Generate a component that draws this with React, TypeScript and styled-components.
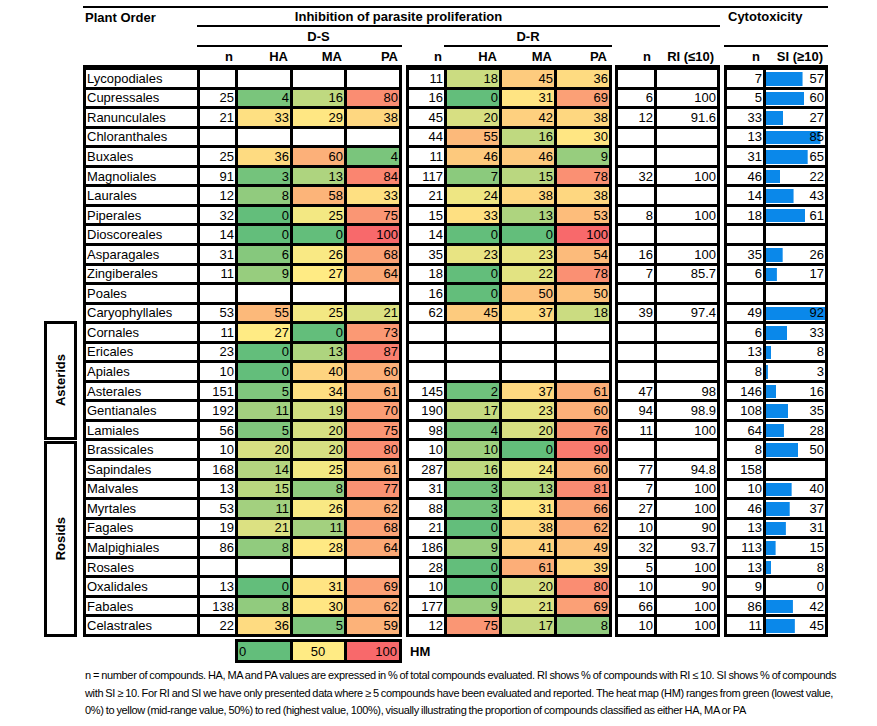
import React from 'react';
import styled, { createGlobalStyle } from 'styled-components';

const GlobalStyle = createGlobalStyle`
  *, *::before, *::after { box-sizing: border-box; }
  html, body { margin: 0; padding: 0; background: #fff; }
  body { font-family: "Liberation Sans", Arial, sans-serif; color: #000; }
`;

type V = number | null;
const _ = null;
interface Row { name: string; ds: V[]; dr: V[]; ri: (string | null)[]; cy: V[] }
const E4: V[] = [_, _, _, _];

const rows: Row[] = [
  { name: 'Lycopodiales', ds: E4, dr: [11, 18, 45, 36], ri: [_, _], cy: [7, 57] },
  { name: 'Cupressales', ds: [25, 4, 16, 80], dr: [16, 0, 31, 69], ri: ['6', '100'], cy: [5, 60] },
  { name: 'Ranunculales', ds: [21, 33, 29, 38], dr: [45, 20, 42, 38], ri: ['12', '91.6'], cy: [33, 27] },
  { name: 'Chloranthales', ds: E4, dr: [44, 55, 16, 30], ri: [_, _], cy: [13, 85] },
  { name: 'Buxales', ds: [25, 36, 60, 4], dr: [11, 46, 46, 9], ri: [_, _], cy: [31, 65] },
  { name: 'Magnoliales', ds: [91, 3, 13, 84], dr: [117, 7, 15, 78], ri: ['32', '100'], cy: [46, 22] },
  { name: 'Laurales', ds: [12, 8, 58, 33], dr: [21, 24, 38, 38], ri: [_, _], cy: [14, 43] },
  { name: 'Piperales', ds: [32, 0, 25, 75], dr: [15, 33, 13, 53], ri: ['8', '100'], cy: [18, 61] },
  { name: 'Dioscoreales', ds: [14, 0, 0, 100], dr: [14, 0, 0, 100], ri: [_, _], cy: [_, _] },
  { name: 'Asparagales', ds: [31, 6, 26, 68], dr: [35, 23, 23, 54], ri: ['16', '100'], cy: [35, 26] },
  { name: 'Zingiberales', ds: [11, 9, 27, 64], dr: [18, 0, 22, 78], ri: ['7', '85.7'], cy: [6, 17] },
  { name: 'Poales', ds: E4, dr: [16, 0, 50, 50], ri: [_, _], cy: [_, _] },
  { name: 'Caryophyllales', ds: [53, 55, 25, 21], dr: [62, 45, 37, 18], ri: ['39', '97.4'], cy: [49, 92] },
  { name: 'Cornales', ds: [11, 27, 0, 73], dr: E4, ri: [_, _], cy: [6, 33] },
  { name: 'Ericales', ds: [23, 0, 13, 87], dr: E4, ri: [_, _], cy: [13, 8] },
  { name: 'Apiales', ds: [10, 0, 40, 60], dr: E4, ri: [_, _], cy: [8, 3] },
  { name: 'Asterales', ds: [151, 5, 34, 61], dr: [145, 2, 37, 61], ri: ['47', '98'], cy: [146, 16] },
  { name: 'Gentianales', ds: [192, 11, 19, 70], dr: [190, 17, 23, 60], ri: ['94', '98.9'], cy: [108, 35] },
  { name: 'Lamiales', ds: [56, 5, 20, 75], dr: [98, 4, 20, 76], ri: ['11', '100'], cy: [64, 28] },
  { name: 'Brassicales', ds: [10, 20, 20, 80], dr: [10, 10, 0, 90], ri: [_, _], cy: [8, 50] },
  { name: 'Sapindales', ds: [168, 14, 25, 61], dr: [287, 16, 24, 60], ri: ['77', '94.8'], cy: [158, _] },
  { name: 'Malvales', ds: [13, 15, 8, 77], dr: [31, 3, 13, 81], ri: ['7', '100'], cy: [10, 40] },
  { name: 'Myrtales', ds: [53, 11, 26, 62], dr: [88, 3, 31, 66], ri: ['27', '100'], cy: [46, 37] },
  { name: 'Fagales', ds: [19, 21, 11, 68], dr: [21, 0, 38, 62], ri: ['10', '90'], cy: [13, 31] },
  { name: 'Malpighiales', ds: [86, 8, 28, 64], dr: [186, 9, 41, 49], ri: ['32', '93.7'], cy: [113, 15] },
  { name: 'Rosales', ds: E4, dr: [28, 0, 61, 39], ri: ['5', '100'], cy: [13, 8] },
  { name: 'Oxalidales', ds: [13, 0, 31, 69], dr: [10, 0, 20, 80], ri: ['10', '90'], cy: [9, 0] },
  { name: 'Fabales', ds: [138, 8, 30, 62], dr: [177, 9, 21, 69], ri: ['66', '100'], cy: [86, 42] },
  { name: 'Celastrales', ds: [22, 36, 5, 59], dr: [12, 75, 17, 8], ri: ['10', '100'], cy: [11, 45] },
];

/* Excel-like 3 colour scale: lowest -> 50th percentile -> highest */
const heatValues: number[] = [];
rows.forEach((r) => {
  [...r.ds.slice(1), ...r.dr.slice(1)].forEach((v) => {
    if (v !== null) heatValues.push(v);
  });
});
const sorted = [...heatValues].sort((a, b) => a - b);
const MIN = sorted[0];
const MAX = sorted[sorted.length - 1];
const rank = 0.5 * (sorted.length - 1);
const MID = sorted[Math.floor(rank)] + (sorted[Math.ceil(rank)] - sorted[Math.floor(rank)]) * (rank - Math.floor(rank));
const C_LO = [99, 190, 123];
const C_MID = [255, 235, 132];
const C_HI = [248, 105, 107];
const mix = (a: number[], b: number[], t: number) =>
  `rgb(${a.map((x, i) => Math.round(x + (b[i] - x) * t)).join(',')})`;
const heat = (v: number) =>
  v <= MID ? mix(C_LO, C_MID, (v - MIN) / (MID - MIN)) : mix(C_MID, C_HI, (v - MID) / (MAX - MID));

const SI_MAX = Math.max(...rows.map((r) => r.cy[1] ?? 0));

/* ---------- styled parts ---------- */

const Page = styled.div`
  padding: 6px 0 0 44px;
  width: 877px;
`;

const HeaderGrid = styled.div`
  margin-left: 39px;
  width: 745px;
  display: grid;
  grid-template-columns: 114px 38px 55px 54px 58px 4px 38px 55px 55px 58px 3px 39px 66px 4px 39px 65px;
  grid-template-rows: 19px 20px 20px;
  border-top: 2px solid #000;
`;

const HCell = styled.div<{
  $col: string;
  $row: string;
  $rule?: boolean;
  $justify?: string;
  $alignTop?: boolean;
  $pl?: number;
  $pr?: number;
}>`
  grid-column: ${(p) => p.$col};
  grid-row: ${(p) => p.$row};
  display: flex;
  align-items: ${(p) => (p.$alignTop ? 'flex-start' : 'center')};
  justify-content: ${(p) => p.$justify ?? 'flex-end'};
  padding: 0 ${(p) => p.$pr ?? 0}px 0 ${(p) => p.$pl ?? 0}px;
  border-bottom: ${(p) => (p.$rule ? '2px solid #000' : '0')};
  font-weight: bold;
  font-size: 13px;
  line-height: 17px;
  white-space: nowrap;
`;

const Body = styled.div`
  display: flex;
  align-items: flex-start;
`;

const GroupCol = styled.div`
  width: 33px;
  margin-right: 6px;
  display: flex;
  flex-direction: column;
  padding-top: 254px;
  gap: 1px;
  flex: none;
`;

const GroupBox = styled.div<{ $h: number }>`
  height: ${(p) => p.$h}px;
  border: 3px solid #000;
  display: flex;
  align-items: center;
  justify-content: center;
`;

const GroupLabel = styled.span`
  writing-mode: vertical-rl;
  transform: rotate(180deg);
  font-weight: bold;
  font-size: 13px;
`;

const Block = styled.div<{ $cols: string; $ml?: number }>`
  flex: none;
  margin-left: ${(p) => p.$ml ?? 0}px;
  display: grid;
  grid-template-columns: ${(p) => p.$cols};
  grid-template-rows: repeat(29, 1fr);
  height: 570px;
  padding: 3px;
  gap: 3px;
  background: #000;
`;

const Cell = styled.div<{ $bg?: string }>`
  background: ${(p) => p.$bg ?? '#fff'};
  font-size: 13px;
  line-height: 1;
  display: flex;
  align-items: center;
  justify-content: flex-end;
  padding-right: 1px;
  white-space: nowrap;
  overflow: hidden;
`;

const NameCell = styled(Cell)`
  justify-content: flex-start;
  padding: 0 0 0 1px;
`;

const BarCell = styled(Cell)<{ $pct: number }>`
  background-color: #fff;
  background-image: linear-gradient(#0a88ea, #0a88ea);
  background-repeat: no-repeat;
  background-position: 0 2px;
  background-size: ${(p) => p.$pct}% calc(100% - 3px);
`;

const LegendRow = styled.div`
  display: flex;
  align-items: center;
  margin: 2px 0 0 191px;
`;

const Legend = styled.div`
  display: grid;
  grid-template-columns: 52px 51px 52px;
  grid-template-rows: 18px;
  padding: 3px;
  gap: 3px;
  background: #000;
`;

const LegendCell = styled.div<{ $bg: string; $justify: string }>`
  background: ${(p) => p.$bg};
  display: flex;
  align-items: center;
  justify-content: ${(p) => p.$justify};
  padding: 0 2px 0 1px;
  font-size: 13px;
`;

const HM = styled.span`
  margin-left: 8px;
  font-weight: bold;
  font-size: 13px;
`;

const Note = styled.p`
  margin: 4px 0 0 41px;
  font-family: "Liberation Sans", Arial, sans-serif;
  font-size: 11px;
  letter-spacing: -0.35px;
  word-spacing: -0.5px;
  line-height: 17.5px;
  white-space: nowrap;
`;

/* ---------- component ---------- */

const fmt = (v: V | string) => (v === null ? '' : String(v));

export default function App() {
  return (
    <>
      <GlobalStyle />
      <Page>
        <HeaderGrid>
          <HCell $col="1" $row="1" $justify="flex-start" $pl={2}>Plant Order</HCell>
          <HCell $col="2 / 14" $row="1" $rule $justify="center" $pr={120}>
            Inhibition of parasite proliferation
          </HCell>
          <HCell $col="15 / 17" $row="1 / 3" $rule $justify="flex-start" $alignTop $pl={4}>
            Cytotoxicity
          </HCell>
          <HCell $col="2 / 6" $row="2" $rule $justify="center" $pl={38}>D-S</HCell>
          <HCell $col="8 / 11" $row="2" $rule $justify="center">D-R</HCell>

          <HCell $col="1" $row="3" $rule />
          <HCell $col="2" $row="3" $rule $pr={2}>n</HCell>
          <HCell $col="3" $row="3" $rule $pr={2}>HA</HCell>
          <HCell $col="4" $row="3" $rule $pr={2}>MA</HCell>
          <HCell $col="5" $row="3" $rule $pr={4}>PA</HCell>
          <HCell $col="7" $row="3" $rule $pr={2}>n</HCell>
          <HCell $col="8" $row="3" $rule $pr={2}>HA</HCell>
          <HCell $col="9" $row="3" $rule $pr={2}>MA</HCell>
          <HCell $col="10" $row="3" $rule $pr={5}>PA</HCell>
          <HCell $col="12" $row="3" $rule $pr={3}>n</HCell>
          <HCell $col="13" $row="3" $rule $pr={6}>RI (≤10)</HCell>
          <HCell $col="15" $row="3" $rule $pr={3}>n</HCell>
          <HCell $col="16" $row="3" $rule $pr={5}>SI (≥10)</HCell>
        </HeaderGrid>

        <Body>
          <GroupCol>
            <GroupBox $h={119}><GroupLabel>Asterids</GroupLabel></GroupBox>
            <GroupBox $h={196}><GroupLabel>Rosids</GroupLabel></GroupBox>
          </GroupCol>

          <Block $cols="111px 35px 52px 51px 52px">
            {rows.map((r) => (
              <React.Fragment key={r.name}>
                <NameCell>{r.name}</NameCell>
                {r.ds.map((v, i) => (
                  <Cell key={i} $bg={i > 0 && v !== null ? heat(v) : undefined}>{fmt(v)}</Cell>
                ))}
              </React.Fragment>
            ))}
          </Block>

          <Block $cols="35px 52px 52px 52px" $ml={4}>
            {rows.map((r) =>
              r.dr.map((v, i) => (
                <Cell key={r.name + i} $bg={i > 0 && v !== null ? heat(v) : undefined}>{fmt(v)}</Cell>
              ))
            )}
          </Block>

          <Block $cols="36px 60px" $ml={3}>
            {rows.map((r) =>
              r.ri.map((v, i) => <Cell key={r.name + i}>{fmt(v)}</Cell>)
            )}
          </Block>

          <Block $cols="36px 59px" $ml={4}>
            {rows.map((r) => (
              <React.Fragment key={r.name}>
                <Cell>{fmt(r.cy[0])}</Cell>
                <BarCell $pct={r.cy[1] ? (r.cy[1] / SI_MAX) * 100 : 0}>{fmt(r.cy[1])}</BarCell>
              </React.Fragment>
            ))}
          </Block>
        </Body>

        <LegendRow>
          <Legend>
            <LegendCell $bg="rgb(99,190,123)" $justify="flex-start">0</LegendCell>
            <LegendCell $bg="rgb(255,235,132)" $justify="center">50</LegendCell>
            <LegendCell $bg="rgb(248,105,107)" $justify="flex-end">100</LegendCell>
          </Legend>
          <HM>HM</HM>
        </LegendRow>

        <Note>
          n = number of compounds. HA, MA and PA values are expressed in % of total compounds evaluated. RI shows % of compounds with RI ≤ 10. SI shows % of compounds
          <br />
          with SI ≥ 10. For RI and SI we have only presented data where ≥ 5 compounds have been evaluated and reported. The heat map (HM) ranges from green (lowest value,
          <br />
          0%) to yellow (mid-range value, 50%) to red (highest value, 100%), visually illustrating the proportion of compounds classified as either HA, MA or PA
        </Note>
      </Page>
    </>
  );
}
